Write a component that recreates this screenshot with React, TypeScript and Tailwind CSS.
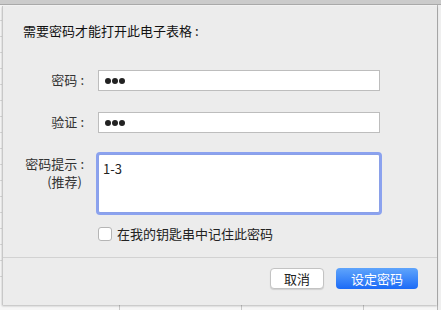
const FONT = '"Noto Sans CJK SC", "Noto Sans", sans-serif';

function Dots() {
  return (
    <div className="flex items-center gap-[1px]">
      <span className="block h-[6px] w-[6px] rounded-full bg-[#222]" />
      <span className="block h-[6px] w-[6px] rounded-full bg-[#222]" />
      <span className="block h-[6px] w-[6px] rounded-full bg-[#222]" />
    </div>
  );
}

function Colon() {
  return <span className="ml-[3px]">:</span>;
}

function Row({ label, children }: { label: React.ReactNode; children: React.ReactNode }) {
  return (
    <div className="flex items-start">
      <div className="w-[82px] shrink-0 pr-[1px] text-right leading-[20px] text-[#333]">{label}</div>
      <div className="ml-[13px]">{children}</div>
    </div>
  );
}

export default function App() {
  return (
    <div
      className="relative h-[310px] w-[441px] overflow-hidden bg-[#f6f6f6]"
      style={{ fontFamily: FONT }}
    >
      {/* spreadsheet behind the sheet */}
      <div className="h-[5px] border-b border-[#a9a9a9] bg-[#cbcbcb]" />
      <div className="flex flex-col">
        {[33, 47, 63, 79, 95, 111, 127, 143, 159, 175, 191, 207, 223, 239, 255, 271, 287].map((y) => (
          <div key={y} className="h-[16px] border-b border-[#d8d8d8]" />
        ))}
      </div>
      <div className="absolute bottom-0 left-0 flex h-[6px] w-full">
        <div className="w-[120px] border-r border-[#c8c8c8]" />
        <div className="w-[122px] border-r border-[#c8c8c8]" />
        <div className="w-[122px] border-r border-[#c8c8c8]" />
      </div>
      <div className="absolute right-0 top-[5px] h-[305px] w-[4px] border-l border-[#b4b4b4] bg-[#efefef]" />

      {/* sheet dialog */}
      <div className="absolute left-[2px] top-[6px] flex h-[299px] w-[435px] flex-col border-l border-[#c8c8c8] bg-[#ececec] text-[13px] text-[#1e1e1e] shadow-[0_1px_2px_rgba(0,0,0,0.25)]">
        <div className="pl-[20px] pt-[15px] leading-[20px] text-[#111]">
          需要密码才能打开此电子表格<Colon />
        </div>

        <div className="mt-[29px] flex flex-col gap-[21px]">
          <Row label={<>密码<Colon /></>}>
            <div className="flex h-[21px] w-[282px] items-center border border-[#bdbdbd] bg-white pl-[6px]">
              <Dots />
            </div>
          </Row>
          <Row label={<>验证<Colon /></>}>
            <div className="flex h-[21px] w-[282px] items-center border border-[#bdbdbd] bg-white pl-[6px]">
              <Dots />
            </div>
          </Row>
        </div>

        <div className="mt-[21px]">
          <Row
            label={
              <div className="pt-[1px] leading-[18px]">
                <div>
                  密码提示<Colon />
                </div>
                <div className="pr-[2px]">(推荐)</div>
              </div>
            }
          >
            <div className="h-[59px] w-[282px] rounded-[2px] border border-[#8aa0e8] bg-white px-[4px] pt-[5px] leading-[18px] text-[#222] shadow-[0_0_0_2px_#8ba2ef]">
              1-3
            </div>
          </Row>
        </div>

        <div className="ml-[95px] mt-[12px] flex items-center gap-[5px]">
          <div className="h-[14px] w-[14px] rounded-[3px] border border-[#b5b5b5] bg-white" />
          <span className="leading-[18px] text-[#222]">在我的钥匙串中记住此密码</span>
        </div>

        <div className="mt-[14px] border-t border-[#d2d2d2]" />

        <div className="flex justify-end gap-[12px] pr-[19px] pt-[10px]">
          <button className="h-[21px] w-[54px] rounded-[4px] border border-[#c3c3c3] bg-white text-[13px] leading-[19px] text-[#222] shadow-[0_1px_1px_rgba(0,0,0,0.12)]">
            取消
          </button>
          <button className="h-[21px] w-[82px] rounded-[4px] bg-gradient-to-b from-[#5fa4fb] to-[#1b6af6] text-[13px] leading-[21px] text-white">
            设定密码
          </button>
        </div>
      </div>
    </div>
  );
}
